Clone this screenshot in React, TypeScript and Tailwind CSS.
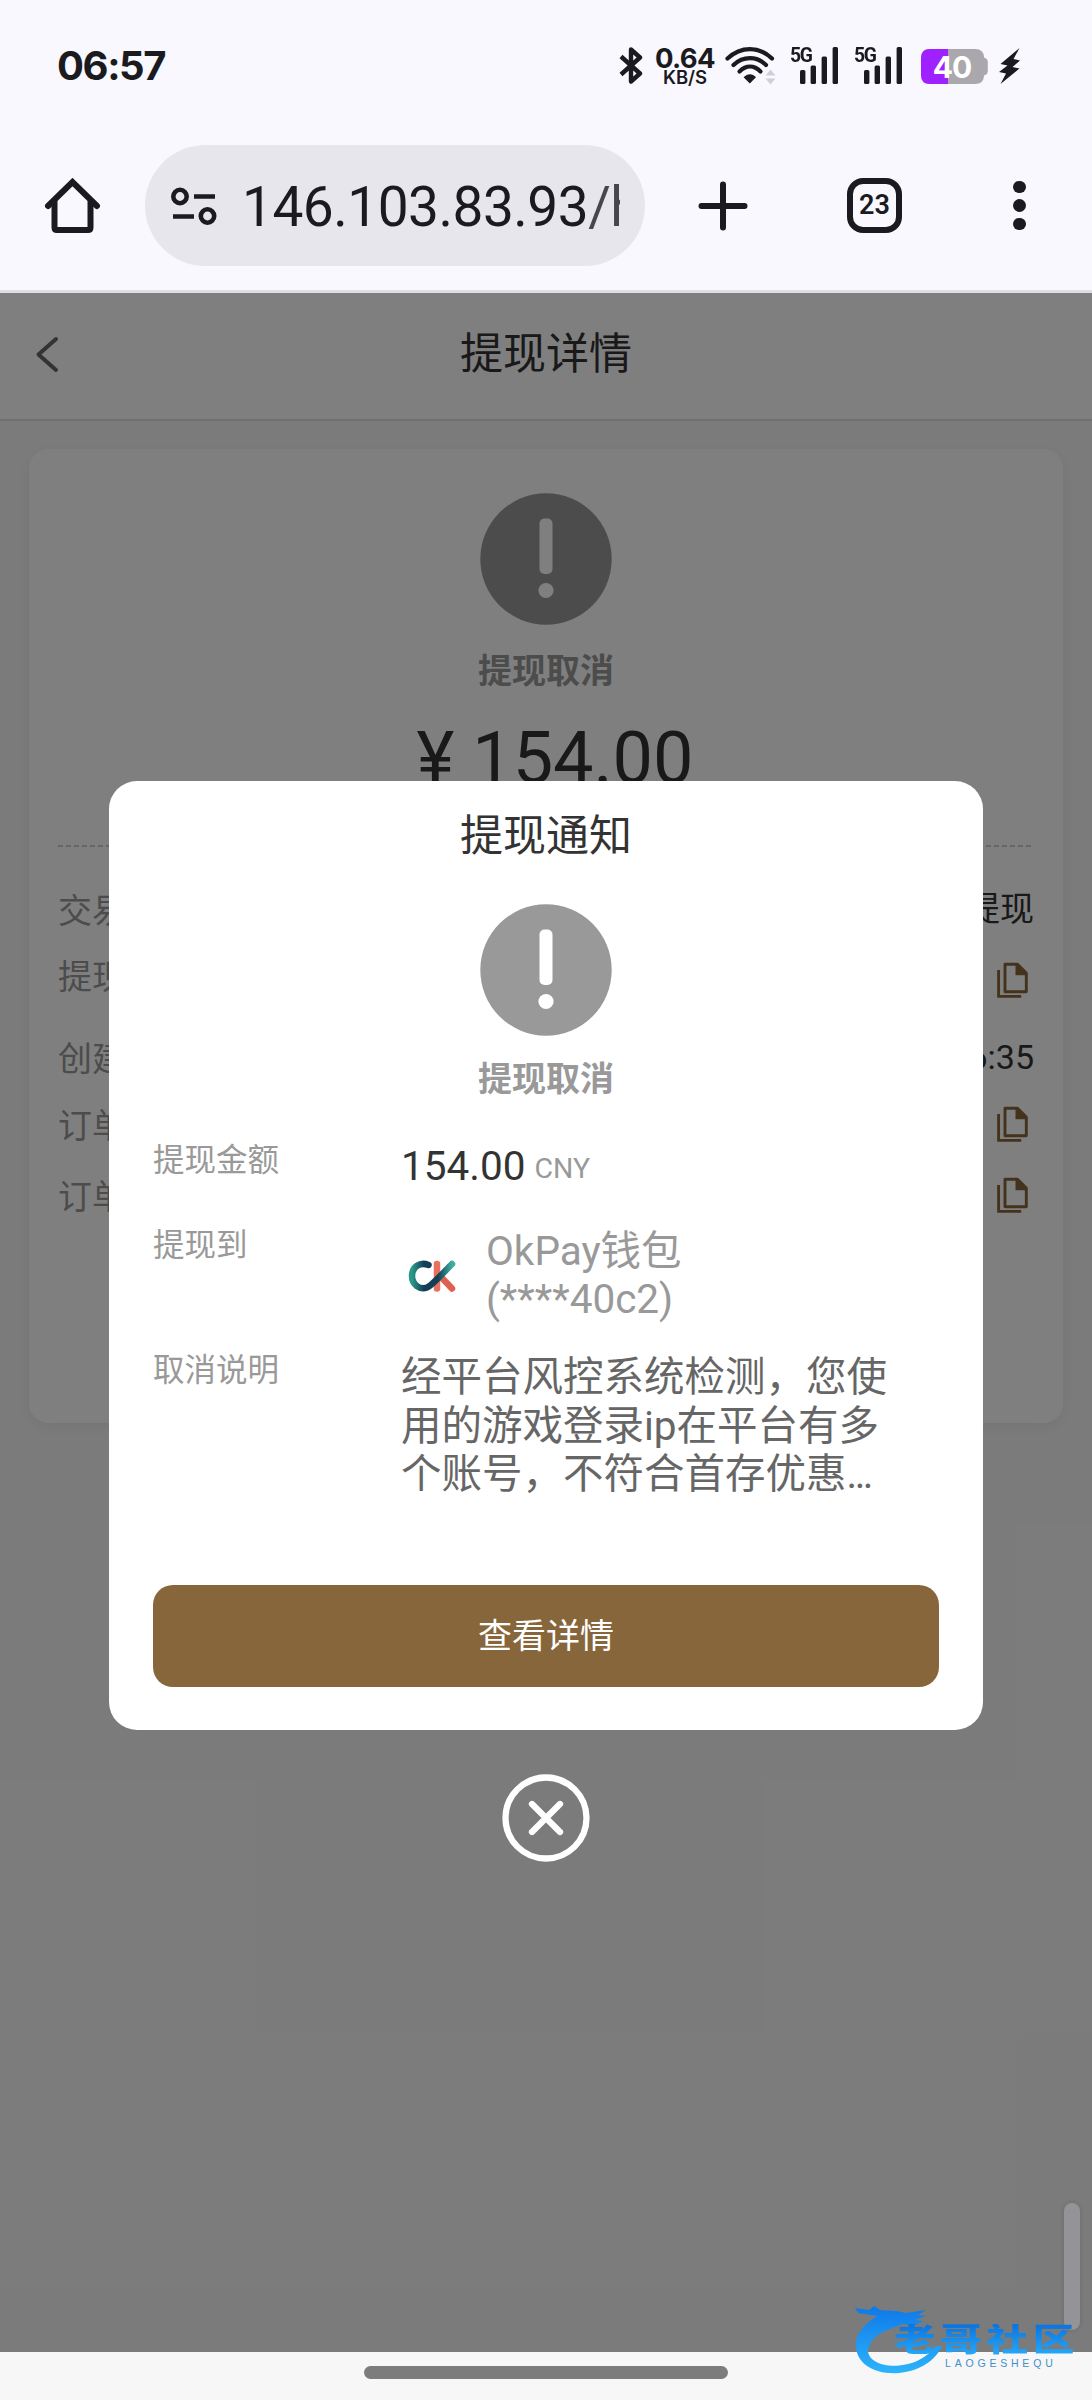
import React from 'react';

const detailRows = [
  { label: '交易类型', value: '提现', gap: 'mt-[42px]', copy: '' },
  { label: '提现方式', value: '', gap: 'mt-[26px]', copy: 'mt-[9px]' },
  { label: '创建时间', value: '06:56:35', gap: 'mt-[42px]', copy: '' },
  { label: '订单编号', value: '', gap: 'mt-[27px]', copy: 'mt-0' },
  { label: '订单号', value: '', gap: 'mt-[31px]', copy: 'mt-0' },
];

const SignalIcon: React.FC = () => (
  <div className="relative w-[48px] h-[37px]">
    <span className="absolute left-0 -top-[4px] origin-left scale-x-[0.92] text-[21px] leading-[24px] font-bold tracking-[-1.5px] font-['Roboto']">5G</span>
    <svg viewBox="0 0 48 37" className="w-full h-full" fill="#1b1b1f">
      <rect x="10" y="23" width="5.4" height="14" rx="1.5" />
      <rect x="20.6" y="18.5" width="5.4" height="18.5" rx="1.5" />
      <rect x="31.6" y="9.5" width="5.4" height="27.5" rx="1.5" />
      <rect x="42.6" y="0" width="5.4" height="37" rx="1.5" />
    </svg>
  </div>
);

const CancelIcon: React.FC = () => (
  <svg viewBox="0 0 132 132" className="w-[132px] h-[132px]">
    <circle cx="66" cy="66" r="65.7" fill="#999" />
    <rect x="59.5" y="25.5" width="13" height="55.5" rx="5" fill="#fff" />
    <circle cx="66" cy="97.5" r="7.6" fill="#fff" />
  </svg>
);

const CopyIcon: React.FC<{ className?: string }> = ({ className = '' }) => (
  <svg viewBox="0 0 31 36" className={`w-[31px] h-[36px] mr-[6px] ${className}`} fill="none" stroke="#86663a" strokeWidth="2.9">
    <path d="M8 2.2h12.5l8.8 8.8v18.8H8z" strokeLinejoin="round" />
    <path d="M18.5 2h2.5l8.5 8.7v2.6h-11z" fill="#86663a" stroke="none" />
    <path d="M1.6 8v26.400h22.6" />
  </svg>
);

const StatusBar: React.FC = () => (
  <div className="flex items-start h-[134px] pt-[47px] text-[#1b1b1f]">
    <div className="ml-[57px] w-[562px] mt-[-5px] font-['Inter'] font-bold text-[40px] leading-[48px] tracking-[-1.4px]">06:57</div>
    <svg viewBox="0 0 24 37" className="w-[24px] h-[37px]" fill="none" stroke="#1b1b1f" strokeWidth="4.4" strokeLinejoin="round">
      <path d="M2 9.5L21 26.5L12 34.5V2.5L21 10.5L2 27.5" />
    </svg>
    <div className="ml-[11px] w-[62px] h-[37px] text-center font-['Inter']">
      <div className="pt-px text-[27.5px] leading-[20px] font-bold tracking-[-0.6px] whitespace-nowrap">0.64</div>
      <div className="mt-px text-[18.5px] leading-[17px] font-semibold">KB/S</div>
    </div>
    <svg viewBox="0 0 52 38" className="ml-[9px] w-[52px] h-[38px]" fill="none" stroke="#1b1b1f" strokeWidth="4.2" strokeLinecap="round">
      <path d="M2.5 11.5C16 -1 34 -1 47 11.5" />
      <path d="M8.5 18C18 8.8 32 8.8 41 18" />
      <path d="M14.5 24.5C21 18 29 18 35.5 24.5" />
      <path d="M18.6 30.2C22.5 26.3 27.5 26.3 31 30.2L24.8 36.5Z" fill="#1b1b1f" stroke="none" />
      <path d="M40.5 28.5l5-6 5 6zM40.5 31.5l5 6 5-6z" fill="#d0ced6" stroke="none" />
    </svg>
    <div className="flex ml-[13px] gap-[16px]">
      <SignalIcon />
      <SignalIcon />
    </div>
    <div className="relative ml-[19px] mt-[2px] w-[67px] h-[35px]">
      <svg viewBox="0 0 67 35" className="w-full h-full">
        <path d="M9 0H54Q63 0 63 8.500Q66.800 9.500 66.800 13V22Q66.800 25.500 63 26.500Q63 35 54 35H9Q0 35 0 26V9Q0 0 9 0Z" fill="#aaa8ad" />
        <path d="M9 0H27V35H9Q0 35 0 26V9Q0 0 9 0Z" fill="#9f21ff" />
      </svg>
      <span className="absolute inset-0 right-[5px] text-center font-['Inter'] font-bold text-[30px] leading-[37px] tracking-[-1px] text-white">40</span>
    </div>
    <svg viewBox="0 0 22 37" className="ml-[11px] w-[22px] h-[37px]" fill="#1b1b1f">
      <path d="M20.5 1L1.5 17L8.5 18.5L0 25L7 26.5L1.5 37L20.5 21.5L13.5 20L21 13.5L14.5 12Z" />
    </svg>
  </div>
);

const BrowserBar: React.FC = () => (
  <div className="flex items-center h-[159px] pb-[13px] border-b-[3px] border-[#dfe0e5] text-[#1b1b1f]">
    <svg viewBox="0 0 56 56" className="ml-[44px] w-[56px] h-[56px]" fill="none" stroke="#1b1b1f" strokeWidth="6" strokeLinecap="round" strokeLinejoin="round">
      <path d="M4 28L28.500 4L53 28" strokeLinejoin="miter" />
      <path d="M10.500 24V49.500Q10.500 52 13 52H44Q46.500 52 46.500 49.500V24" />
    </svg>
    <div className="flex items-center ml-[45px] w-[500px] h-[121px] rounded-full bg-[#e7e6ec]">
      <svg viewBox="0 0 48 40" className="ml-[25px] w-[48px] h-[40px]" fill="none" stroke="#1b1b1f" strokeWidth="4.600">
        <circle cx="10" cy="10.500" r="6.700" />
        <path d="M24 10.500H45M3 30.500H24" />
        <circle cx="37.500" cy="30" r="6.700" />
      </svg>
      <div className="ml-[24px] w-[378px] pt-[2px] overflow-hidden whitespace-nowrap font-['Roboto'] text-[55px] leading-[70px] tracking-[-0.5px]">
        146.103.83.93<span className="text-[#46464c]">/h</span>
      </div>
    </div>
    <svg viewBox="0 0 50 50" className="ml-[53px] w-[50px] h-[50px]" fill="none" stroke="#1b1b1f" strokeWidth="6" strokeLinecap="round">
      <path d="M25 3.500V46.500M3.500 25H46.500" />
    </svg>
    <div className="flex items-center justify-center ml-[99px] w-[55px] h-[55px] rounded-[16px] border-[6px] border-[#1b1b1f] font-['Roboto'] font-semibold text-[27px]">
      23
    </div>
    <div className="flex flex-col gap-[6px] ml-[111px]">
      <i className="w-[12.500px] h-[12.500px] rounded-full bg-[#1b1b1f]" />
      <i className="w-[12.500px] h-[12.500px] rounded-full bg-[#1b1b1f]" />
      <i className="w-[12.500px] h-[12.500px] rounded-full bg-[#1b1b1f]" />
    </div>
  </div>
);

const DetailPage: React.FC = () => (
  <div className="h-full bg-[#f7f7f7]">
    <header className="relative flex items-center justify-center h-[128px] pb-[4px] bg-white border-b-[2px] border-[#e0e0e0]">
      <svg viewBox="0 0 26 38" className="absolute left-[34px] top-[42px] w-[26px] h-[38px]" fill="none" stroke="#666" strokeWidth="4" strokeLinecap="round" strokeLinejoin="round">
        <path d="M22 4L4.500 19.500L22 35" />
      </svg>
      <h1 className="text-[43px] leading-[60px] text-[#333]">提现详情</h1>
    </header>
    <section className="flex flex-col items-center mx-[29px] mt-[28px] h-[974px] pt-[44px] rounded-[20px] bg-white shadow-[0_4px_16px_rgba(0,0,0,0.06)]">
      <CancelIcon />
      <div className="mt-[26px] text-[34px] leading-[40px] font-bold text-[#999]">提现取消</div>
      <div className="mt-[26px] pl-[18px] text-[72px] leading-[84px] text-[#333]">¥ 154.00</div>
      <div className="mt-[44px] w-[976px] h-[2px] bg-[repeating-linear-gradient(90deg,#ccc_0_5px,transparent_5px_8px)]" />
      {detailRows.map((row, i) => (
        <div key={i} className={`flex items-center justify-between w-[976px] h-[40px] text-[34px] leading-[40px] ${row.gap}`}>
          <span className="pt-[3px] text-[#999]">{row.label}</span>
          {row.copy ? <CopyIcon className={row.copy} /> : <span className="text-[#333]">{row.value}</span>}
        </div>
      ))}
    </section>
  </div>
);

const OkPayLogo: React.FC = () => (
  <svg viewBox="0 0 48 32" className="w-[48px] h-[32px]" fill="none" strokeWidth="6.500" strokeLinecap="round" strokeLinejoin="round">
    <defs>
      <linearGradient id="okc" x1="0" y1="0" x2="1" y2="0">
        <stop offset="0" stopColor="#2a9a88" />
        <stop offset="0.3" stopColor="#123f57" />
        <stop offset="0.65" stopColor="#123f57" />
        <stop offset="1" stopColor="#3db09c" />
      </linearGradient>
    </defs>
    <path d="M29 4V28.500" stroke="#e8705f" />
    <path d="M33 17L44 28.500" stroke="#df6050" />
    <path d="M20.500 5C12 1.500 4 7 4 16C4 25 12 30 19 27.500C24 25.500 36 12 44 4" stroke="url(#okc)" />
  </svg>
);

const NoticeModal: React.FC = () => (
  <div className="absolute inset-0 flex flex-col items-center bg-black/50">
    <div className="flex flex-col items-center mt-[488px] w-[874px] h-[949px] px-[44px] pt-[25px] rounded-[28px] bg-white">
      <h2 className="text-[43px] leading-[60px] text-[#333]">提现通知</h2>
      <div className="mt-[38px]">
        <CancelIcon />
      </div>
      <div className="mt-[23px] text-[34px] leading-[40px] font-bold text-[#999]">提现取消</div>
      <div className="flex w-full mt-[38px] h-[85px]">
        <span className="w-[248px] text-[31.500px] leading-[48px] text-[#999]">提现金额</span>
        <span className="mt-[5px] text-[40.500px] leading-[48px] text-[#333]">
          154.00<span className="relative -top-[2px] ml-[9px] text-[28.500px] text-[#999]">CNY</span>
        </span>
      </div>
      <div className="flex w-full h-[125px]">
        <span className="w-[255px] text-[31.500px] leading-[48px] text-[#999]">提现到</span>
        <div className="mt-[38px]">
          <OkPayLogo />
        </div>
        <div className="ml-[30px] mt-[5px] text-[40.500px] leading-[48px] text-[#999]">
          OkPay钱包
          <br />
          (****40c2)
        </div>
      </div>
      <div className="flex w-full">
        <span className="w-[248px] text-[31.500px] leading-[48px] text-[#999]">取消说明</span>
        <p className="mt-[6px] whitespace-nowrap text-[40.500px] leading-[48.500px] text-[#666]">
          经平台风控系统检测，您使
          <br />
          用的游戏登录ip在平台有多
          <br />
          个账号，不符合首存优惠<span className="tracking-[-2.500px]">...</span>
        </p>
      </div>
      <button className="mt-auto mb-[43px] w-[786px] h-[102px] shrink-0 rounded-[20px] bg-[#86663a] text-[34px] text-white">
        查看详情
      </button>
    </div>
    <svg viewBox="0 0 88 88" className="mt-[44px] w-[88px] h-[88px]" fill="none" stroke="#fff" strokeWidth="6.300" strokeLinecap="round">
      <circle cx="44" cy="44" r="40.500" />
      <path d="M30 30L58 58M58 30L30 58" />
    </svg>
  </div>
);

const Watermark: React.FC = () => (
  <div className="absolute left-[854px] top-[2304px] w-[226px] h-[72px]">
    <svg viewBox="0 0 226 72" className="absolute inset-0 w-full h-full">
      <defs>
        <linearGradient id="wm" x1="0" y1="0" x2="0" y2="1">
          <stop offset="0" stopColor="#0e78e8" />
          <stop offset="1" stopColor="#2db4fb" />
        </linearGradient>
      </defs>
      <path
        fill="url(#wm)"
        d="M1 4L15 6L20 2L26 6L42 7L52 9L72 6L64 11L72 12L61 16L70 17L61 21L49 20L39 24C25 28 15 36 14 47C15 59 34 65 54 60C67 57 77 49 81 42L88 42C82 56 66 67 45 69C21 71 3 60 2 43C1 29 11 20 23 12L4 9Z"
      />
    </svg>
    <div className="absolute left-[40px] top-[20px] flex gap-[3.500px] bg-gradient-to-b from-[#0c72df] to-[#2aaefa] bg-clip-text text-transparent text-[31.500px] leading-[34px] font-black origin-left scale-x-[1.32]">
      <span>老</span>
      <span>哥</span>
      <span>社</span>
      <span>区</span>
    </div>
    <div className="absolute left-[91px] top-[54px] font-['Liberation_Sans'] text-[10.500px] leading-[10px] tracking-[3.800px] text-[#3d8fd0]">LAOGESHEQU</div>
  </div>
);

const App: React.FC = () => {
  return (
    <div className="relative flex flex-col w-[1092px] h-[2400px] overflow-hidden bg-[#faf8ff] font-['Roboto','Noto_Sans_CJK_SC',sans-serif]">
      <StatusBar />
      <BrowserBar />
      <main className="relative h-[2059px] shrink-0">
        <DetailPage />
        <NoticeModal />
        {/* Scroll indicator */}
        <div className="absolute right-[12px] bottom-[22px] w-[16px] h-[127px] rounded-full bg-[#949498] shadow-[0_0_5px_rgba(0,0,0,0.15)]" />
      </main>
      {/* Gesture bar */}
      <div className="flex justify-center h-[48px] pt-[14px] bg-[#f7f7f7]">
        <div className="w-[364px] h-[13px] rounded-full bg-[#7c7c7c]" />
      </div>
      <Watermark />
    </div>
  );
};

export default App;
